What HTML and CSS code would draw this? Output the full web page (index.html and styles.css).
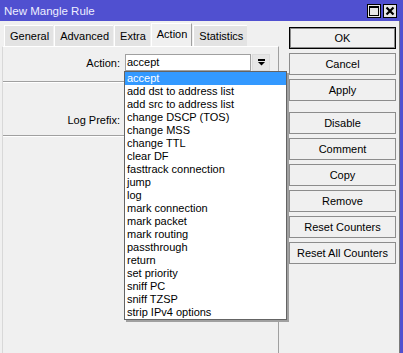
FILE: index.html
```html
<!DOCTYPE html>
<html lang="en">
<head>
    <meta charset="UTF-8">
    <title>New Mangle Rule</title>
    <link rel="stylesheet" href="styles.css">
</head>
<body>
    <div class="window">
        <div class="titlebar">
            <span class="title">New Mangle Rule</span>
            <div class="title-buttons">
                <span class="tbtn">
                    <svg width="10" height="10" viewBox="0 0 10 10"><rect x="0.5" y="0.5" width="9" height="9" fill="none" stroke="#000"/><rect x="0" y="0" width="10" height="2" fill="#000"/></svg>
                </span>
                <span class="tbtn">
                    <svg width="10" height="10" viewBox="0 0 10 10"><path d="M1.5 1.5 L8.5 8.5 M8.5 1.5 L1.5 8.5" stroke="#000" stroke-width="2.2"/></svg>
                </span>
            </div>
        </div>

        <div class="frame">
            <div class="main">
                <!-- tab strip -->
                <div class="tabs">
                    <span class="tab">General</span>
                    <span class="tab">Advanced</span>
                    <span class="tab">Extra</span>
                    <span class="tab active">Action</span>
                    <span class="tab">Statistics</span>
                </div>

                <div class="panel">
                    <div class="field-row">
                        <label class="field-label">Action:</label>
                        <div class="combo">accept</div>
                        <span class="combo-btn">
                            <svg width="7" height="7" viewBox="0 0 7 7"><rect x="0" y="0" width="7" height="2" fill="#000"/><path d="M0 3 H7 L3.5 6.5 Z" fill="#000"/></svg>
                        </span>
                    </div>
                    <div class="sep"></div>
                    <div class="field-row log-row">
                        <label class="field-label">Log Prefix:</label>
                        <div class="combo"></div>
                    </div>
                    <div class="sep"></div>
                </div>
            </div>

            <div class="actions">
                <button class="btn default">OK</button>
                <button class="btn">Cancel</button>
                <button class="btn">Apply</button>
                <button class="btn group-start">Disable</button>
                <button class="btn">Comment</button>
                <button class="btn">Copy</button>
                <button class="btn">Remove</button>
                <button class="btn">Reset Counters</button>
                <button class="btn">Reset All Counters</button>
            </div>
        </div>

        <!-- open list of the Action combo -->
        <ul class="dropdown">
            <li class="selected">accept</li>
            <li>add dst to address list</li>
            <li>add src to address list</li>
            <li>change DSCP (TOS)</li>
            <li>change MSS</li>
            <li>change TTL</li>
            <li>clear DF</li>
            <li>fasttrack connection</li>
            <li>jump</li>
            <li>log</li>
            <li>mark connection</li>
            <li>mark packet</li>
            <li>mark routing</li>
            <li>passthrough</li>
            <li>return</li>
            <li>set priority</li>
            <li>sniff PC</li>
            <li>sniff TZSP</li>
            <li>strip IPv4 options</li>
        </ul>
    </div>
</body>
</html>
```

FILE: styles.css
```css
html, body {
    margin: 0;
    padding: 0;
    height: 353px;
    overflow: hidden;
}
body {
    font-family: "Liberation Sans", Arial, sans-serif;
    font-size: 11px;
    color: #000;
    background-color: #f0f0f0;
}
.window {
    position: relative;
    width: 403px;
    height: 353px;
}
.titlebar {
    height: 21px;
    background-color: #5050d0;
    display: flex;
    align-items: center;
    justify-content: space-between;
    padding-left: 4px;
    box-sizing: border-box;
}
.title {
    color: #eeeeff;
    font-size: 11.5px;
}
.title-buttons {
    display: flex;
    gap: 2px;
    margin-right: 6px;
}
.tbtn {
    width: 14px;
    height: 14px;
    box-sizing: border-box;
    border: 1px solid #000;
    background-color: #e6e6e6;
    display: flex;
    align-items: center;
    justify-content: center;
}
.frame {
    display: flex;
    height: 332px;
    border-right: 1px solid #7a7a7a;
    box-shadow: 3px 0 0 #5050d0;
    width: 400px;
    box-sizing: border-box;
}
.main {
    width: 279px;
    display: flex;
    flex-direction: column;
    padding-left: 2px;
    box-sizing: border-box;
}
.tabs {
    display: flex;
    align-items: flex-end;
    height: 25px;
    padding-left: 2px;
}
.tab {
    height: 21px;
    line-height: 21px;
    padding: 0 4px 0 5px;
    margin-right: 1px;
    background-color: #e3e3e3;
    border-top: 1px solid #fff;
    border-left: 1px solid #fff;
    box-sizing: border-box;
}
.tab.active {
    height: 23px;
    line-height: 21px;
    background-color: #f0f0f0;
    border-right: 1px solid #a0a0a0;
}
.panel {
    flex: 1;
    border-top: 1px solid #fff;
    border-left: 1px solid #d8d8d8;
    border-right: 1px solid #a0a0a0;
    padding-top: 7px;
}
.field-row {
    display: flex;
    align-items: center;
    height: 17px;
}
.field-label {
    width: 117px;
    text-align: right;
    margin-right: 5px;
}
.combo {
    width: 126px;
    height: 17px;
    box-sizing: border-box;
    border: 1px solid #a0a0a0;
    background-color: #fff;
    padding-left: 1px;
    line-height: 15px;
}
.combo-btn {
    width: 18px;
    height: 17px;
    margin-left: 1px;
    box-sizing: border-box;
    border: 1px solid #dcdcdc;
    background-color: #e6e6e6;
    display: flex;
    align-items: center;
    justify-content: center;
}
.sep {
    margin-top: 10px;
    border-top: 1px solid #a0a0a0;
    border-bottom: 1px solid #fff;
}
.log-row {
    margin-top: 28px;
}
.log-row + .sep {
    margin-top: 7px;
}
.actions {
    display: flex;
    flex-direction: column;
    gap: 4px;
    padding-top: 6px;
    margin-left: 10px;
    width: 107px;
}
.btn {
    height: 22px;
    font-family: "Liberation Sans", Arial, sans-serif;
    font-size: 11px;
    color: #000;
    background-color: #f0f0f0;
    border: 1px solid #8c8c8c;
    padding: 0;
    box-sizing: border-box;
}
.btn.default {
    border-color: #000;
    box-shadow: inset 0 0 0 1px #8c8c8c;
}
.btn.group-start {
    margin-top: 7px;
}
.dropdown {
    position: absolute;
    left: 124px;
    top: 71px;
    width: 163px;
    margin: 0;
    padding: 0;
    list-style: none;
    background-color: #fff;
    border: 1px solid #646464;
    box-shadow: 2px 2px 0 #a0a0a0;
    box-sizing: border-box;
}
.dropdown li {
    height: 13px;
    line-height: 13px;
    padding-left: 2px;
    white-space: nowrap;
}
.dropdown li.selected {
    background-color: #3399ff;
    color: #fff;
}
```
